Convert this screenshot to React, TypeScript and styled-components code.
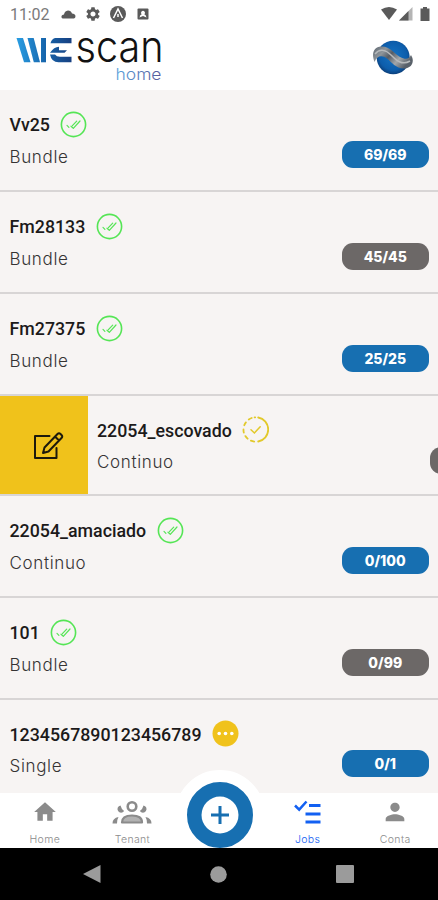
import React from 'react';
import styled, { createGlobalStyle, css } from 'styled-components';
import { MdHome, MdPerson, MdSettings } from 'react-icons/md';

const GlobalStyle = createGlobalStyle`
  *, *::before, *::after { box-sizing: border-box; }
  body { margin: 0; background: #000; }
  svg { display: block; flex: none; }
`;

const Screen = styled.div`
  width: 438px;
  height: 900px;
  display: flex;
  flex-direction: column;
  overflow: hidden;
  background: #f7f4f3;
  font-family: Inter, sans-serif;
`;

const StatusBar = styled.div`
  height: 28px;
  flex: none;
  display: flex;
  align-items: center;
  justify-content: space-between;
  padding: 0 8px 0 10px;
  background: #fff;
  color: #5a5a5a;
`;

const Clock = styled.span`
  font: 400 16px/28px Roboto, sans-serif;
  letter-spacing: -0.1px;
  width: 51px;
  padding-top: 1px;
  color: #7a7a7a;
`;

const StatusGroup = styled.div`
  display: flex;
  align-items: center;
`;

const AppHeader = styled.header`
  height: 62px;
  flex: none;
  display: flex;
  justify-content: space-between;
  background: #fff;
  padding: 4px 24px 0 14px;
`;

const LogoMark = styled.svg`
  overflow: visible;
`;

const GlobeSlot = styled.div`
  padding-top: 8px;
`;

const JobList = styled.main`
  height: 703px;
  flex: none;
  overflow: hidden;
`;

const JobRow = styled.section<{ $compact?: boolean }>`
  display: flex;
  width: ${(p) => (p.$compact ? '526px' : '438px')};
  height: ${(p) => (p.$compact ? '100px' : '102px')};
  border-bottom: 2px solid #d8d5d5;

  &:nth-child(6) {
    height: 101.5px;
  }
`;

const EditAction = styled.button`
  width: 88px;
  border: 0;
  padding: 1px 0 0 9px;
  display: flex;
  align-items: center;
  justify-content: center;
  background: #f0c21b;
`;

const JobBody = styled.div<{ $swiped?: boolean }>`
  flex: 1;
  display: flex;
  justify-content: space-between;
  padding: 0 9px 0 ${(p) => (p.$swiped ? '9px' : '9.5px')};
`;

const JobText = styled.div<{ $raised?: boolean }>`
  padding-top: ${(p) => (p.$raised ? '20px' : '20.6px')};
`;

const TitleLine = styled.div`
  display: flex;
  align-items: center;
  gap: 10.5px;
  height: 27px;
`;

const Title = styled.h2`
  margin: 0;
  font: 500 17.8px/27px Roboto, sans-serif;
  padding-top: 1px;
  color: #1c1a1a;
  white-space: nowrap;
`;

const Kind = styled.p`
  margin: 6px 0 0;
  font: 300 17px/26px Inter, sans-serif;
  letter-spacing: 0.65px;
  color: #353333;
`;

const Count = styled.span<{ $tone: Tone }>`
  align-self: flex-start;
  margin-top: 50.5px;
  width: 87.5px;
  height: 27px;
  border-radius: 11px;
  text-align: center;
  font: 800 14px/27px Inter, sans-serif;
  color: #fff;
  ${(p) =>
    p.$tone === 'blue'
      ? css`background: #176fb1;`
      : css`background: #6c6867;`}
`;

const TabBar = styled.nav`
  height: 55px;
  flex: none;
  display: grid;
  grid-template-columns: repeat(5, 87.6px);
  padding-left: 1px;
  background: #fff;
`;

const Tab = styled.div<{ $active?: boolean }>`
  display: flex;
  flex-direction: column;
  align-items: center;
  padding-top: 5px;
  color: ${(p) => (p.$active ? '#1260f2' : '#8b8b8b')};
`;

const TabIcon = styled.div`
  height: 28px;
  display: flex;
  align-items: center;
`;

const TabLabel = styled.span`
  margin-top: 6.5px;
  font: 300 10.5px/14px Inter, sans-serif;
  letter-spacing: 0.35px;
`;

const AddSlot = styled.div`
  display: flex;
  justify-content: center;
  height: 78px;
  margin-top: -23px;
  overflow: hidden;
`;

const AddButton = styled.button`
  flex: none;
  width: 90px;
  height: 90px;
  padding: 0;
  border: 12px solid #fff;
  border-radius: 50%;
  background: #176fb1;
  display: flex;
  align-items: center;
  justify-content: center;
`;

const SystemBar = styled.footer`
  height: 52px;
  flex: none;
  display: flex;
  justify-content: space-between;
  align-items: center;
  padding: 0 84px 0 83px;
  background: #000;
`;

type Tone = 'blue' | 'gray';
type Status = 'done' | 'partial' | 'pending';

interface Job {
  name: string;
  kind: string;
  count: string;
  tone: Tone;
  status: Status;
  swiped?: boolean;
}

const jobs: Job[] = [
  { name: 'Vv25', kind: 'Bundle', count: '69/69', tone: 'blue', status: 'done' },
  { name: 'Fm28133', kind: 'Bundle', count: '45/45', tone: 'gray', status: 'done' },
  { name: 'Fm27375', kind: 'Bundle', count: '25/25', tone: 'blue', status: 'done' },
  { name: '22054_escovado', kind: 'Continuo', count: '', tone: 'gray', status: 'partial', swiped: true },
  { name: '22054_amaciado', kind: 'Continuo', count: '0/100', tone: 'blue', status: 'done' },
  { name: '101', kind: 'Bundle', count: '0/99', tone: 'gray', status: 'done' },
  { name: '1234567890123456789', kind: 'Single', count: '0/1', tone: 'blue', status: 'pending' },
];

function StatusIcon({ status }: { status: Status }) {
  if (status === 'pending') {
    return (
      <svg width="27" height="27" viewBox="0 0 27 27">
        <circle cx="13.5" cy="13.5" r="13" fill="#f0c21b" />
        <g fill="#fff">
          <circle cx="7.200" cy="13.5" r="1.800" />
          <circle cx="13.500" cy="13.5" r="1.800" />
          <circle cx="19.800" cy="13.5" r="1.800" />
        </g>
      </svg>
    );
  }
  if (status === 'partial') {
    return (
      <svg width="27" height="27" viewBox="0 0 27 27" fill="none" stroke="#e2c92b" strokeWidth="1.8" strokeLinecap="round">
        <path d="M16.2 1.5a12.2 12.2 0 0 1 0 24" />
        <path d="M12.2 25.600a12 12 0 0 1-3.300-.9M5.600 22.700a12 12 0 0 1-2.200-2.600M1.800 16.600a12 12 0 0 1-.3-3.100M2.300 9.200a12 12 0 0 1 1.600-2.800M6.800 3.500a12 12 0 0 1 2.900-1.500M12.600 1.300h.6" />
        <path d="M9 13.700l3.400 3.300 5.800-6.200" strokeWidth="1.500" />
      </svg>
    );
  }
  return (
    <svg width="27" height="27" viewBox="0 0 27 27" fill="none" stroke="#55e555" strokeLinecap="round" strokeLinejoin="round">
      <circle cx="13.5" cy="13.5" r="12.1" strokeWidth="1.6" />
      <path d="M11 15.200l2.300 2.100 6.700-7.300M7 14.400l1.900 1.900M12.400 14.600l4.300-4.500" strokeWidth="1.2" />
    </svg>
  );
}

function Logo() {
  return (
    <LogoMark width="150" height="54" viewBox="14 32 150 54">
      <defs>
        <linearGradient id="mark" gradientUnits="userSpaceOnUse" x1="16" y1="0" x2="72" y2="0">
          <stop offset="0" stopColor="#2a9fe4" />
          <stop offset=".5" stopColor="#1767ae" />
          <stop offset="1" stopColor="#173f80" />
        </linearGradient>
        <linearGradient id="word" gradientUnits="userSpaceOnUse" x1="116" y1="0" x2="161" y2="0">
          <stop offset="0" stopColor="#5aa2dc" />
          <stop offset="1" stopColor="#57599a" />
        </linearGradient>
      </defs>
      <g fill="url(#mark)">
        <path d="M16.500 38h6.500L30.500 62.300H24z" />
        <path d="M27.500 38h6.200L40 62.300h-6.200z" />
        <path d="M41 38h5v24.300h-5z" />
        <path d="M55 38h16.500v5.300H50.500q.8-4 4.500-5.300z" />
        <path d="M50 52.700q4-6 9-6v3.600h8l-2.500 2.400z" />
        <path d="M50 54.500h5q1.500 2.200 5 2.200h11.500v5.600H58.500q-7 0-8.500-7.800z" />
      </g>
      <text x="75.500" y="61.800" textLength="88" lengthAdjust="spacingAndGlyphs" fontFamily="Inter, sans-serif" fontWeight="300" fontSize="44" fill="#111">scan</text>
      <text x="115.500" y="80" textLength="46" lengthAdjust="spacingAndGlyphs" fontFamily="Inter, sans-serif" fontWeight="300" fontSize="16.500" fill="url(#word)">home</text>
    </LogoMark>
  );
}

function Globe() {
  return (
    <svg width="42" height="36" viewBox="0 0 42 36">
      <defs>
        <radialGradient id="sea" cx=".5" cy=".45" r=".6">
          <stop offset="0" stopColor="#1473c4" />
          <stop offset=".7" stopColor="#0d5dab" />
          <stop offset="1" stopColor="#0b3468" />
        </radialGradient>
        <linearGradient id="band" x1="0" y1="0" x2="1" y2=".5">
          <stop offset="0" stopColor="#5c6670" />
          <stop offset=".3" stopColor="#8f959a" />
          <stop offset=".5" stopColor="#555c65" />
          <stop offset=".75" stopColor="#a3a7aa" />
          <stop offset="1" stopColor="#59616a" />
        </linearGradient>
      </defs>
      <ellipse cx="21.200" cy="17.500" rx="16.500" ry="16.800" fill="url(#sea)" />
      <path d="M2.500 22C-1 13 2 7 9 6.500c9-.5 13 7 19 10.500 6 3 9 2 11-2 4 6 1 13-6 13.500-9 .5-13-6-18-10-5-4-10-3-12.500 3.500z" fill="url(#band)" />
      <path d="M3 14c5-6 11-4 16 1s11 11 19 6" fill="none" stroke="#b7babc" strokeWidth="1.500" />
    </svg>
  );
}

const EditIcon = () => (
  <svg width="32" height="30" viewBox="0 0 32 30" fill="none" stroke="#1d1a0c" strokeWidth="2" strokeLinejoin="round" strokeLinecap="round">
    <path d="M16.500 5H2v22h21.500V17" />
    <path d="M11.500 16.500L24.500 3q1.500-1.500 3 0l1 1q1.500 1.500 0 3L15.500 20.500l-5.500 1.500zM22 5.500l4 4" />
  </svg>
);

const TeamIcon = () => (
  <svg width="40" height="24" viewBox="0 0 40 24" fill="currentColor">
    <circle cx="20" cy="6.500" r="4.300" fill="none" stroke="currentColor" strokeWidth="2.600" />
    <path d="M8.500 5.500a3.600 3.600 0 1 0 3.600 5.500Q9.300 9 8.500 5.500zM31.500 5.500a3.600 3.600 0 1 1-3.600 5.500Q30.700 9 31.500 5.500z" />
    <path d="M10 22.500q0-7 10-7t10 7z" fill="#b2b2b2" stroke="currentColor" strokeWidth="2.200" strokeLinejoin="round" />
    <path d="M.5 23.500q0-5.500 6-6.500-1.500 2.500-1.500 6.500zM39.500 23.500q0-5.500-6-6.500 1.500 2.500 1.500 6.500z" />
  </svg>
);

const TasksIcon = () => (
  <svg width="27" height="24" viewBox="0 0 27 24" fill="none" stroke="currentColor" strokeWidth="2.800">
    <path d="M1 5.500l4.200 4.200L12.500 1.500" strokeWidth="2.500" />
    <path d="M15 5.500h11.500M11.500 14h15M11.500 22h15" />
  </svg>
);

export default function App() {
  return (
    <>
      <GlobalStyle />
      <Screen>
        <StatusBar>
          <StatusGroup>
            <Clock>11:02</Clock>
            <svg width="15" height="9" viewBox="0 0 15 9" fill="currentColor"><path d="M1.500 8.500Q0 7.500.5 6T3 4.500Q3.500 1 7 .5q3 0 4 3 3 0 3.500 2.500 0 2-1.500 2.500z" /></svg>
            <svg width="50" height="18" viewBox="76 5 50 18">
              <g transform="translate(84.500 5.500)"><MdSettings size={17} /></g>
              <circle cx="118" cy="14" r="8" fill="currentColor" />
              <path d="M113.500 18L118 9l4.500 9M118 14v3" fill="none" stroke="#fff" strokeWidth="1.500" />
            </svg>
            <svg width="24" height="14" viewBox="126 7 24 14">
              <rect x="137.500" y="8.500" width="11" height="11" rx="1" fill="currentColor" />
              <path d="M139.500 17.500q.5-3 2.200-3.200a2 2 0 1 1 2.600 0q1.700.2 2.200 3.200l-3.500-1.500z" fill="#fff" />
            </svg>
          </StatusGroup>
          <svg width="50" height="16" viewBox="380 6 50 16" fill="currentColor">
            <path d="M381 9.500q8-5 16 0L389 20z" />
            <path d="M399 20.500L412.500 7v13.500z" fill="#b5b5b5" />
            <path d="M399 20.500l9.500-9.500v9.500z" />
            <path d="M420.500 8.500h2.500V7h4v1.500h2.500v12.500h-9z" />
          </svg>
        </StatusBar>
        <AppHeader>
          <Logo />
          <GlobeSlot><Globe /></GlobeSlot>
        </AppHeader>
        <JobList>
          {jobs.map((job) => (
            <JobRow key={job.name} $compact={job.swiped}>
              {job.swiped && <EditAction aria-label="Edit"><EditIcon /></EditAction>}
              <JobBody $swiped={job.swiped}>
                <JobText $raised={job.swiped}>
                  <TitleLine>
                    <Title>{job.name}</Title>
                    <StatusIcon status={job.status} />
                  </TitleLine>
                  <Kind>{job.kind}</Kind>
                </JobText>
                <Count $tone={job.tone}>{job.count}</Count>
              </JobBody>
            </JobRow>
          ))}
        </JobList>
        <TabBar>
          <Tab><TabIcon><MdHome size={26} /></TabIcon><TabLabel>Home</TabLabel></Tab>
          <Tab><TabIcon><TeamIcon /></TabIcon><TabLabel>Tenant</TabLabel></Tab>
          <AddSlot>
            <AddButton aria-label="Add">
              <svg width="38" height="38" viewBox="0 0 38 38">
                <circle cx="19" cy="19" r="18.500" fill="#fff" />
                <path d="M10 19h18M19 10v18" stroke="#176fb1" strokeWidth="3" />
              </svg>
            </AddButton>
          </AddSlot>
          <Tab $active><TabIcon><TasksIcon /></TabIcon><TabLabel>Jobs</TabLabel></Tab>
          <Tab><TabIcon><MdPerson size={28} /></TabIcon><TabLabel>Conta</TabLabel></Tab>
        </TabBar>
        <SystemBar>
          <svg width="18" height="18" viewBox="0 0 18 18"><path d="M0 9L17.500 0v18z" fill="#9b9b9b" /></svg>
          <svg width="17" height="17" viewBox="0 0 17 17"><circle cx="8.500" cy="8.500" r="8.300" fill="#9b9b9b" /></svg>
          <svg width="18" height="18" viewBox="0 0 18 18"><rect width="18" height="18" rx="1" fill="#9b9b9b" /></svg>
        </SystemBar>
      </Screen>
    </>
  );
}
